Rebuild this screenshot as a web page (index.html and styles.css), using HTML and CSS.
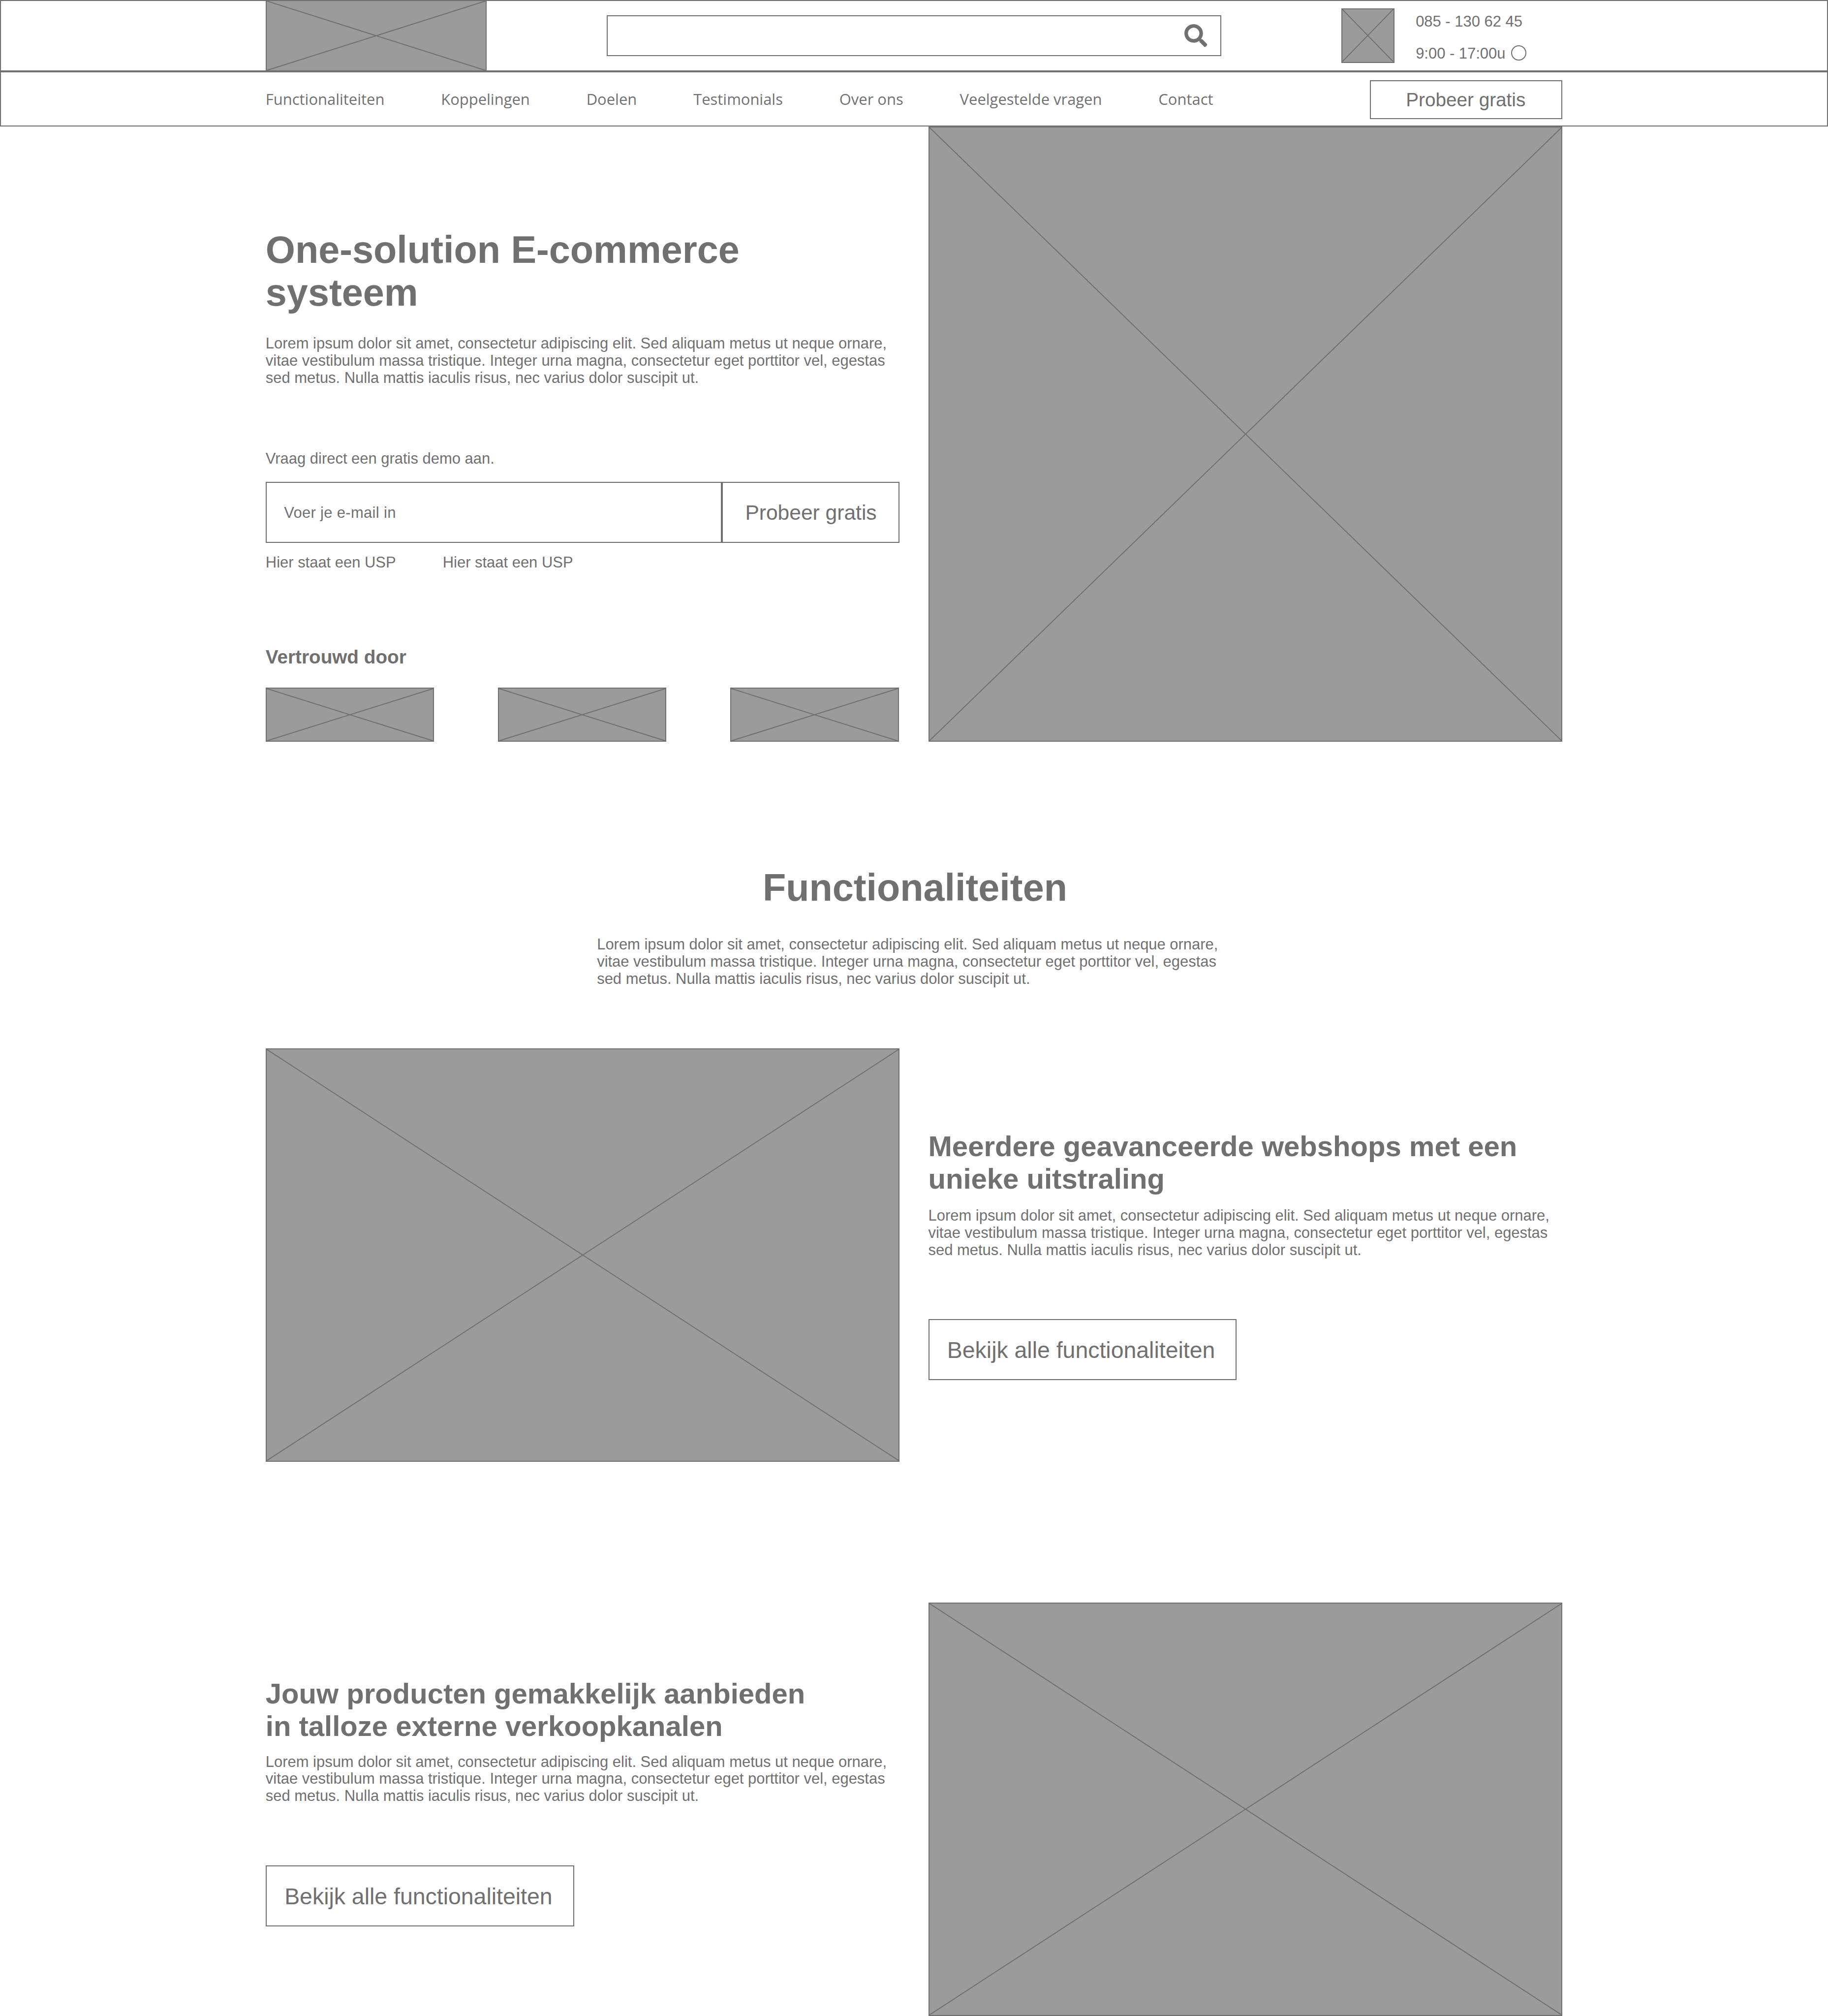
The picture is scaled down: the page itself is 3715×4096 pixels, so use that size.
FILE: index.html
```html
<!DOCTYPE html>
<html lang="nl">
<head>
<meta charset="utf-8">
<title>One-solution E-commerce systeem</title>
<link rel="stylesheet" href="styles.css">
</head>
<body>
<svg class="defs" width="0" height="0">
  <symbol id="cross" viewBox="0 0 100 100" preserveAspectRatio="none">
    <path d="M0 0L100 100M100 0L0 100" fill="none" stroke="#707070" stroke-width="2" vector-effect="non-scaling-stroke"/>
  </symbol>
</svg>
<header>
  <div class="topbar">
    <div class="image logo"><svg><use href="#cross"/></svg></div>
    <div class="search">
      <svg class="search-icon" viewBox="0 0 512 512"><path fill="#707070" d="M505 442.7L405.3 343c-4.5-4.5-10.6-7-17-7H372c27.6-35.3 44-79.7 44-128C416 93.1 322.9 0 208 0S0 93.1 0 208s93.1 208 208 208c48.3 0 92.7-16.4 128-44v16.3c0 6.4 2.5 12.5 7 17l99.7 99.7c9.4 9.4 24.6 9.4 33.9 0l28.3-28.3c9.4-9.4 9.4-24.6.1-34zM208 336c-70.7 0-128-57.2-128-128 0-70.7 57.2-128 128-128 70.7 0 128 57.2 128 128 0 70.7-57.2 128-128 128z"/></svg>
    </div>
    <div class="image avatar"><svg><use href="#cross"/></svg></div>
    <div class="contact">
      <div>085 - 130 62 45</div>
      <div class="hours">9:00 - 17:00u <span class="status"></span></div>
    </div>
  </div>
  <nav class="navbar">
    <ul class="menu">
      <li>Functionaliteiten</li>
      <li>Koppelingen</li>
      <li>Doelen</li>
      <li>Testimonials</li>
      <li>Over ons</li>
      <li>Veelgestelde vragen</li>
      <li>Contact</li>
    </ul>
    <a class="button button-nav">Probeer gratis</a>
  </nav>
</header>
<main>
  <section class="row hero">
    <div class="column hero-copy">
      <h1>One-solution E-commerce<br>systeem</h1>
      <p class="hero-text">Lorem ipsum dolor sit amet, consectetur adipiscing elit. Sed aliquam metus ut neque ornare,<br>vitae vestibulum massa tristique. Integer urna magna, consectetur eget porttitor vel, egestas<br>sed metus. Nulla mattis iaculis risus, nec varius dolor suscipit ut.</p>
      <p class="demo-label">Vraag direct een gratis demo aan.</p>
      <div class="demo-form">
        <div class="email">Voer je e-mail in</div>
        <a class="button button-demo">Probeer gratis</a>
      </div>
      <div class="usps"><span>Hier staat een USP</span><span>Hier staat een USP</span></div>
      <h3>Vertrouwd door</h3>
      <div class="brands">
        <div class="image brand"><svg><use href="#cross"/></svg></div>
        <div class="image brand"><svg><use href="#cross"/></svg></div>
        <div class="image brand"><svg><use href="#cross"/></svg></div>
      </div>
    </div>
    <div class="image column hero-image"><svg><use href="#cross"/></svg></div>
  </section>
  <section class="intro">
    <h1>Functionaliteiten</h1>
    <p>Lorem ipsum dolor sit amet, consectetur adipiscing elit. Sed aliquam metus ut neque ornare,<br>vitae vestibulum massa tristique. Integer urna magna, consectetur eget porttitor vel, egestas<br>sed metus. Nulla mattis iaculis risus, nec varius dolor suscipit ut.</p>
  </section>
  <section class="row feature">
    <div class="image column"><svg><use href="#cross"/></svg></div>
    <div class="column copy-first">
      <h2>Meerdere geavanceerde webshops met een<br>unieke uitstraling</h2>
      <p>Lorem ipsum dolor sit amet, consectetur adipiscing elit. Sed aliquam metus ut neque ornare,<br>vitae vestibulum massa tristique. Integer urna magna, consectetur eget porttitor vel, egestas<br>sed metus. Nulla mattis iaculis risus, nec varius dolor suscipit ut.</p>
      <a class="button button-more">Bekijk alle functionaliteiten</a>
    </div>
  </section>
  <section class="row feature feature-last">
    <div class="column copy-second">
      <h2>Jouw producten gemakkelijk aanbieden<br>in talloze externe verkoopkanalen</h2>
      <p>Lorem ipsum dolor sit amet, consectetur adipiscing elit. Sed aliquam metus ut neque ornare,<br>vitae vestibulum massa tristique. Integer urna magna, consectetur eget porttitor vel, egestas<br>sed metus. Nulla mattis iaculis risus, nec varius dolor suscipit ut.</p>
      <a class="button button-more">Bekijk alle functionaliteiten</a>
    </div>
    <div class="image column"><svg><use href="#cross"/></svg></div>
  </section>
</main>
</body>
</html>
```
FILE: styles.css
```css
html {
  font-size: 96.745px;
}

*, *::before, *::after {
  box-sizing: border-box;
}

body {
  margin: 0;
  width: 38.4rem;
  height: 42.34rem;
  overflow: hidden;
  background: #fff;
  color: #707070;
  font-family: "Liberation Sans", Arial, sans-serif;
  font-size: .32rem;
  line-height: .36rem;
  white-space: nowrap;
}

h1, h2, h3, p, ul {
  margin: 0;
  padding: 0;
}

h1 {
  font-size: .8rem;
  line-height: .9rem;
}

h2 {
  font-size: .6rem;
  line-height: .68rem;
}

h3 {
  font-size: .4rem;
  line-height: .46rem;
}

.defs {
  position: absolute;
}

/* Image placeholders: grey box with a diagonal cross */
.image {
  flex: none;
  background: #9b9b9b;
  border: 2px solid #707070;
}

.image svg {
  display: block;
  width: 100%;
  height: 100%;
}

.button {
  display: flex;
  align-items: center;
  justify-content: center;
  border: 2px solid #707070;
}

/* Header */
.topbar {
  display: flex;
  align-items: center;
  height: 1.5rem;
  padding-left: calc(5.58rem - 2px);
  border: 2px solid #707070;
}

.logo {
  width: 4.64rem;
  height: 1.5rem;
}

.search {
  display: flex;
  align-items: center;
  justify-content: flex-end;
  width: 12.92rem;
  height: .86rem;
  margin-left: 2.52rem;
  padding-right: calc(.3rem - 2px);
  border: 2px solid #707070;
}

.search-icon {
  width: .48rem;
  height: .48rem;
}

.avatar {
  width: 1.11rem;
  height: 1.14rem;
  margin-left: 2.52rem;
}

.contact {
  display: flex;
  flex-direction: column;
  gap: .32rem;
  margin-left: .45rem;
  padding-top: .09rem;
}

.hours {
  display: flex;
  align-items: center;
}

.status {
  width: .32rem;
  height: .32rem;
  margin: -.04rem 0 0 .12rem;
  border: 2px solid #707070;
  border-radius: 50%;
}

.navbar {
  display: flex;
  align-items: center;
  justify-content: space-between;
  height: 1.16rem;
  padding: 0 calc(5.58rem - 2px);
  border: 2px solid #707070;
}

.menu {
  display: flex;
  gap: 1.1875rem;
  list-style: none;
  font-family: "Open Sans", sans-serif;
}

.button-nav {
  width: 4.04rem;
  height: .82rem;
  padding: .02rem .02rem 0 0;
  margin-top: .02rem;
  font-size: .4rem;
}

/* Content rows */
.row {
  display: flex;
  gap: .6rem;
  margin: 0 5.58rem;
}

.column {
  width: 13.32rem;
}

.hero {
  height: 12.92rem;
}

.hero-copy {
  padding-top: 2.14rem;
}

.hero-text {
  margin-top: .44rem;
}

.demo-label {
  margin-top: 1.34rem;
}

.demo-form {
  display: flex;
  height: 1.28rem;
  margin-top: .3rem;
}

.email {
  display: flex;
  align-items: center;
  width: 9.58rem;
  padding: .04rem 0 0 .365rem;
  border: 2px solid #707070;
  letter-spacing: .0035rem;
}

.button-demo {
  width: 3.74rem;
  padding: .01rem 0 0 .01rem;
  font-size: .44rem;
}

.usps {
  display: grid;
  grid-template-columns: 3.72rem 3.72rem;
  margin-top: .235rem;
}

.hero-copy h3 {
  margin-top: 1.58rem;
}

.brands {
  display: flex;
  justify-content: space-between;
  width: 13.3rem;
  margin-top: .405rem;
}

.brand {
  width: 3.54rem;
  height: 1.14rem;
}

.intro {
  height: 6.44rem;
  padding-top: 2.613rem;
}

.intro h1 {
  padding-left: .04rem;
  text-align: center;
}

.intro p {
  width: 13.32rem;
  margin: .567rem auto 0;
}

.feature {
  height: 8.68rem;
}

.feature-last {
  margin-top: 2.96rem;
}

.copy-first {
  padding-top: 1.715rem;
}

.copy-first p {
  margin-top: .265rem;
}

.copy-first .button-more {
  margin-top: 1.26rem;
}

.copy-second {
  padding-top: 1.57rem;
}

.copy-second p {
  margin-top: .235rem;
}

.copy-second .button-more {
  margin-top: 1.275rem;
}

.button-more {
  width: 6.48rem;
  height: 1.28rem;
  padding: .03rem .06rem 0 0;
  font-size: .48rem;
}
```
